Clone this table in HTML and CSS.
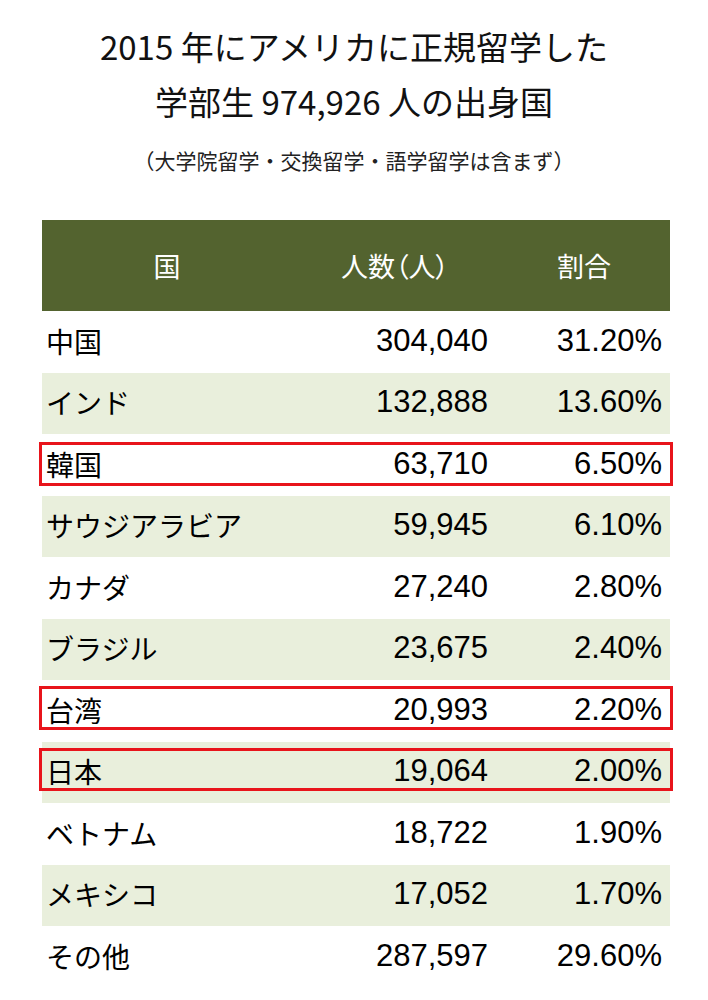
FILE: index.html
```html
<!DOCTYPE html>
<html lang="ja">
<head>
<meta charset="utf-8">
<title>2015年にアメリカに正規留学した学部生の出身国</title>
<link rel="stylesheet" href="styles.css">
</head>
<body>
<div class="page">
  <h1 class="title">2015 年にアメリカに正規留学した<br>学部生 974,926 人の出身国</h1>
  <p class="subtitle">（大学院留学・交換留学・語学留学は含まず）</p>
  <div class="table">
    <div class="row head">
      <div class="c1">国</div>
      <div class="c2 paren">人数（人）</div>
      <div class="c3">割合</div>
    </div>
    <div class="row"><div class="c1">中国</div><div class="c2 num">304,040</div><div class="c3 num">31.20%</div></div>
    <div class="row alt"><div class="c1">インド</div><div class="c2 num">132,888</div><div class="c3 num">13.60%</div></div>
    <div class="row hl hl-a"><div class="c1">韓国</div><div class="c2 num">63,710</div><div class="c3 num">6.50%</div></div>
    <div class="row alt"><div class="c1">サウジアラビア</div><div class="c2 num">59,945</div><div class="c3 num">6.10%</div></div>
    <div class="row"><div class="c1">カナダ</div><div class="c2 num">27,240</div><div class="c3 num">2.80%</div></div>
    <div class="row alt"><div class="c1">ブラジル</div><div class="c2 num">23,675</div><div class="c3 num">2.40%</div></div>
    <div class="row hl"><div class="c1">台湾</div><div class="c2 num">20,993</div><div class="c3 num">2.20%</div></div>
    <div class="row alt hl"><div class="c1">日本</div><div class="c2 num">19,064</div><div class="c3 num">2.00%</div></div>
    <div class="row"><div class="c1">ベトナム</div><div class="c2 num">18,722</div><div class="c3 num">1.90%</div></div>
    <div class="row alt"><div class="c1">メキシコ</div><div class="c2 num">17,052</div><div class="c3 num">1.70%</div></div>
    <div class="row"><div class="c1">その他</div><div class="c2 num">287,597</div><div class="c3 num">29.60%</div></div>
  </div>
</div>
</body>
</html>
```
FILE: styles.css
```css
html, body {
  margin: 0;
  padding: 0;
  background: #ffffff;
}

.page {
  width: 708px;
  font-family: "Noto Sans CJK JP", "Liberation Sans", sans-serif;
  color: #000000;
}

.title {
  margin: 19px 0 0;
  font-size: 33px;
  font-weight: 400;
  line-height: 55px;
  text-align: center;
  color: #111111;
}

.subtitle {
  margin: 16px 0 0;
  font-size: 21px;
  line-height: 30px;
  text-align: center;
  color: #222222;
}

.table {
  margin: 45px 0 0 42px;
  width: 628px;
}

.row {
  position: relative;
  display: grid;
  grid-template-columns: 250px 206px 172px;
  align-items: center;
  height: 61.5px;
  font-size: 28px;
}

.row.alt {
  background: #e9efdc;
}

.row.head {
  height: 91px;
  background: #53632f;
  color: #ffffff;
  font-size: 27px;
}

.row.head > div {
  text-align: center;
  padding: 0;
}

.paren {
  font-feature-settings: "palt";
}

.c1 {
  padding-left: 4px;
  padding-bottom: 2px;
}

.num {
  font-family: "Liberation Sans", Arial, sans-serif;
  font-size: 31px;
  text-align: right;
  padding-bottom: 2px;
}

.c2.num {
  padding-right: 10px;
}

.c3.num {
  padding-right: 8px;
}

.row.hl::after {
  content: "";
  position: absolute;
  left: -3px;
  right: -3px;
  top: 6px;
  bottom: 12px;
  border: 3px solid #e8141b;
  pointer-events: none;
}

.row.hl-a::after {
  top: 8px;
  bottom: 10px;
}
```
